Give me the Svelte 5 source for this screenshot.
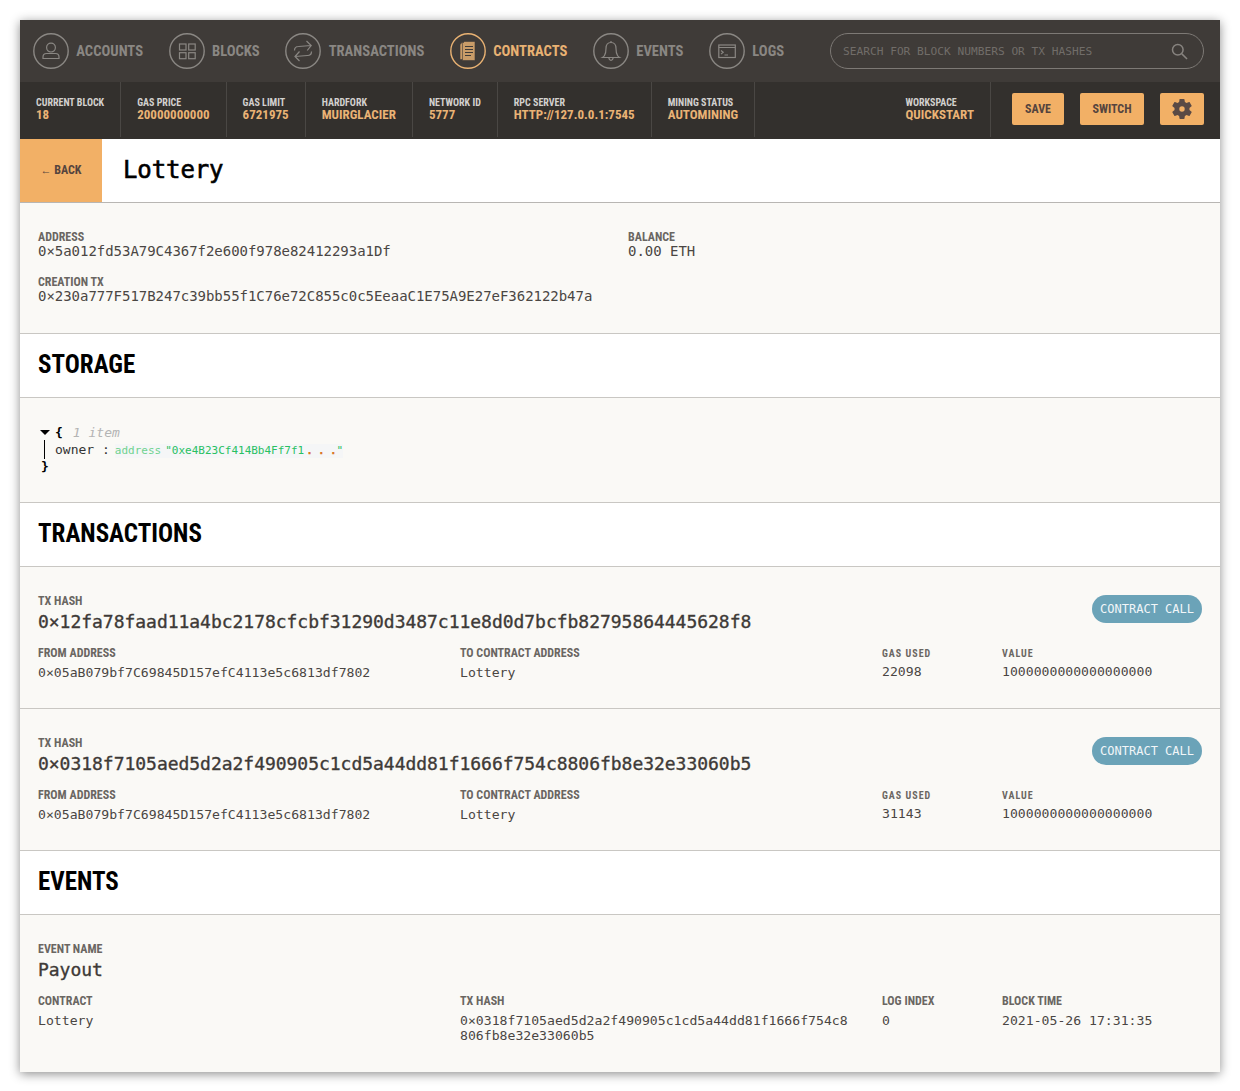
<script>
  const nav = [
    { label: 'ACCOUNTS', icon: 'user' },
    { label: 'BLOCKS', icon: 'blocks' },
    { label: 'TRANSACTIONS', icon: 'swap' },
    { label: 'CONTRACTS', icon: 'doc', active: true },
    { label: 'EVENTS', icon: 'bell' },
    { label: 'LOGS', icon: 'log' }
  ];
  const stats = [
    ['CURRENT BLOCK', '18'],
    ['GAS PRICE', '20000000000'],
    ['GAS LIMIT', '6721975'],
    ['HARDFORK', 'MUIRGLACIER'],
    ['NETWORK ID', '5777'],
    ['RPC SERVER', 'HTTP://127.0.0.1:7545'],
    ['MINING STATUS', 'AUTOMINING']
  ];
  const txs = [
    { hash: '0×12fa78faad11a4bc2178cfcbf31290d3487c11e8d0d7bcfb82795864445628f8', gas: '22098' },
    { hash: '0×0318f7105aed5d2a2f490905c1cd5a44dd81f1666f754c8806fb8e32e33060b5', gas: '31143' }
  ];
</script>

{#snippet icon(name)}
  <svg class="ico" viewBox="0 0 36 36" width="36" height="36" fill="none" stroke="currentColor" stroke-width="1.2">
    <circle cx="18" cy="18" r="17.2" stroke-width="1.4" />
    {#if name === 'user'}
      <circle cx="18" cy="14.6" r="4.4" />
      <path d="M13.5 20.5h9q3.5 0 3.5 3.5v1.5H10V24q0-3.5 3.5-3.5z" />
    {:else if name === 'blocks'}
      <rect x="10.5" y="11" width="6.5" height="6" />
      <rect x="19.7" y="11" width="6.5" height="6" />
      <rect x="10.5" y="19.7" width="6.5" height="6" />
      <rect x="19.7" y="19.7" width="6.5" height="6" />
    {:else if name === 'swap'}
      <path d="M9.500 17.500q0-4 4-4l12.500-1M21.500 8l4.700 4.500-4 5" />
      <path d="M26.500 18.500q0 4-4 4l-12.500 1M14.500 18.500l-4.500 5 4.500 4.500" />
    {:else if name === 'doc'}
      <path class="solid" d="M12 9.500h9v17h-11v-15z" />
      <path class="solid" d="M14.500 8.500h10.500v19H12.500V10.500z" />
      <path class="gap" d="M15 13.500h8M15 16.500h8M15 19.500h8M15 22.500h6" />
    {:else if name === 'bell'}
      <path d="M18 9.500q-5 0-5 6 0 4.500-1.500 7-.8 1.300-2 2h17q-1.200-.7-2-2-1.500-2.500-1.500-7 0-6-5-6z" />
      <path d="M15.800 24.500q.4 2.800 2.200 2.800t2.200-2.800M18 8v1.500" />
    {:else if name === 'log'}
      <rect x="9.800" y="12" width="16.500" height="12.500" />
      <path d="M9.800 14.500h16.500M12 17.500l2.200 1.800-2.200 1.800M15.500 22h3.500" />
    {/if}
  </svg>
{/snippet}

<div class="app">
  <header class="top">
    <nav class="nav">
      {#each nav as n}
        <a class="nav-item" class:active={n.active}>
          {@render icon(n.icon)}
          <span class="nav-label">{n.label}</span>
        </a>
      {/each}
    </nav>
    <div class="search">
      <span class="placeholder">SEARCH FOR BLOCK NUMBERS OR TX HASHES</span>
      <svg viewBox="0 0 18 18" width="17" height="17" fill="none" stroke="#87837f" stroke-width="1.6"><circle cx="7.200" cy="7.200" r="5.600" /><path d="M11.500 11.500l5.500 5.500" /></svg>
    </div>
  </header>

  <div class="status">
    {#each stats as s}
      <div class="stat"><span class="stat-k">{s[0]}</span><span class="stat-v">{s[1]}</span></div>
    {/each}
    <div class="spacer"></div>
    <div class="stat ws"><span class="stat-k">WORKSPACE</span><span class="stat-v">QUICKSTART</span></div>
    <div class="actions">
      <button class="btn save">SAVE</button>
      <button class="btn switch">SWITCH</button>
      <button class="btn gear" aria-label="Settings">
        <svg viewBox="0 0 24 24" width="24" height="24"><path fill="#5a4a45" fill-rule="evenodd" d="M19.430 12.980c.04-.32.070-.64.070-.98s-.030-.66-.070-.98l2.110-1.650c.19-.15.240-.42.120-.64l-2-3.460c-.12-.22-.39-.3-.61-.22l-2.490 1c-.52-.4-1.080-.73-1.690-.98l-.38-2.650A.49.490 0 0 0 14 2h-4c-.25 0-.46.18-.49.420l-.38 2.650c-.61.25-1.170.59-1.690.98l-2.490-1a.5.500 0 0 0-.61.22l-2 3.460c-.13.220-.07.490.12.640l2.110 1.650c-.04.320-.07.650-.07.980s.030.660.070.980l-2.110 1.650c-.19.150-.24.420-.12.640l2 3.460c.12.220.39.300.61.220l2.490-1c.52.400 1.080.730 1.690.980l.38 2.650c.030.240.240.420.49.420h4c.25 0 .46-.18.490-.42l.38-2.650c.61-.25 1.170-.59 1.690-.98l2.490 1c.23.090.49 0 .61-.22l2-3.460c.12-.22.070-.49-.12-.64l-2.110-1.650zM12 14.700a2.700 2.700 0 1 1 0-5.400 2.700 2.700 0 0 1 0 5.400z" /></svg>
      </button>
    </div>
  </div>

  <div class="titlebar">
    <button class="back"><span class="arrow">←</span> BACK</button>
    <h1>Lottery</h1>
  </div>

  <section class="body info">
    <div class="info-grid">
      <div class="f"><div class="k">ADDRESS</div><div class="v14">0×5a012fd53A79C4367f2e600f978e82412293a1Df</div></div>
      <div class="f"><div class="k">BALANCE</div><div class="v14">0.00 ETH</div></div>
      <div class="f wide"><div class="k">CREATION TX</div><div class="v14">0×230a777F517B247c39bb55f1C76e72C855c0c5EeaaC1E75A9E27eF362122b47a</div></div>
    </div>
  </section>

  <h2>STORAGE</h2>
  <section class="body storage">
    <div class="json">
      <div class="jl"><span class="tri"></span><b>&#123;</b> <i>1 item</i></div>
      <div class="jl row"><span class="bar"></span><span class="key">owner :</span><span class="val"><span class="type">address</span><span class="str">"0xe4B23Cf414Bb4Ff7f1<span class="dots">..</span><span class="dot">.</span>"</span></span></div>
      <div class="jl end"><b>&#125;</b></div>
    </div>
  </section>

  <h2>TRANSACTIONS</h2>
  {#each txs as t}
    <section class="body tx">
      <div class="tx-head">
        <div><div class="k">TX HASH</div><div class="hash">{t.hash}</div></div>
        <span class="badge">CONTRACT CALL</span>
      </div>
      <div class="cols">
        <div><div class="k">FROM ADDRESS</div><div class="v13">0×05aB079bf7C69845D157efC4113e5c6813df7802</div></div>
        <div><div class="k">TO CONTRACT ADDRESS</div><div class="v13">Lottery</div></div>
        <div><div class="k sp">GAS USED</div><div class="v13">{t.gas}</div></div>
        <div><div class="k sp">VALUE</div><div class="v13">1000000000000000000</div></div>
      </div>
    </section>
  {/each}

  <h2>EVENTS</h2>
  <section class="body tx event">
    <div><div class="k">EVENT NAME</div><div class="hash">Payout</div></div>
    <div class="cols">
      <div><div class="k">CONTRACT</div><div class="v13">Lottery</div></div>
      <div class="wrap"><div class="k">TX HASH</div><div class="v13">0×0318f7105aed5d2a2f490905c1cd5a44dd81f1666f754c8806fb8e32e33060b5</div></div>
      <div><div class="k">LOG INDEX</div><div class="v13">0</div></div>
      <div><div class="k">BLOCK TIME</div><div class="v13">2021-05-26 17:31:35</div></div>
    </div>
  </section>
</div>

<style>
  :global(body) { background: #fff; }
  .app {
    margin: 20px;
    width: 1200px;
    background: #faf9f6;
    box-shadow: 0 2px 10px rgba(0, 0, 0, 0.45);
    font-family: "DejaVu Sans Mono", monospace;
    color: #3e3a37;
  }
  .top {
    height: 62px;
    background: #3f3b38;
    display: flex;
    align-items: flex-start;
    justify-content: space-between;
    padding: 13px 16px 0 13px;
    box-sizing: border-box;
  }
  .nav { display: flex; gap: 25.600px; }
  .nav-item { display: flex; align-items: center; gap: 7.300px; color: #8a8783; }
  .nav-item.active { color: #e9b273; }
  .ico { display: block; }
  .solid { fill: #c99c68; stroke: #3f3b38; stroke-width: 0.600; }
  .gap { stroke: #3f3b38; stroke-width: 1.200; }
  .nav-label {
    font: 700 14.600px Roboto, sans-serif;
    font-stretch: 75%;
  }
  .search {
    width: 374px;
    height: 36px;
    box-sizing: border-box;
    border: 1px solid #7d7975;
    border-radius: 18px;
    display: flex;
    align-items: center;
    justify-content: space-between;
    padding: 0 15px 0 12px;
  }
  .placeholder { font-size: 11.200px; color: #716d69; }
  .status {
    height: 57px;
    box-sizing: border-box;
    background: #33302d;
    display: flex;
    align-items: stretch;
    padding-bottom: 2px;
  }
  .stat {
    padding: 14px 16px 0;
    border-right: 1px solid #4a4744;
    display: flex;
    flex-direction: column;
  }
  .stat-k {
    font: 700 10px/13px Roboto, sans-serif;
    font-stretch: 75%;
    color: #d3d1cf;
  }
  .stat-v {
    font: 700 13px/12px Roboto, sans-serif;
    font-stretch: 75%;
    color: #eab375;
    letter-spacing: 0.015px;
  }
  .spacer { flex: 1; }
  .actions { display: flex; gap: 16px; padding: 11px 16px 0 21px; }
  .btn {
    height: 32px;
    border: 0;
    border-radius: 2px;
    background: #f2b066;
    color: #55443e;
    font: 700 12px Roboto, sans-serif;
    font-stretch: 75%;
    padding: 0 0 1px;
    display: flex;
    align-items: center;
    justify-content: center;
  }
  .save { width: 52px; }
  .switch { width: 64px; }
  .gear { width: 44px; padding: 0; }
  .titlebar {
    height: 64px;
    box-sizing: border-box;
    background: #fff;
    border-bottom: 1px solid #b8b6b3;
    display: flex;
  }
  .back {
    width: 82px;
    border: 0;
    padding: 0 0 2px;
    background: #f2b066;
    color: #55443e;
    font: 700 12px Roboto, sans-serif;
    font-stretch: 75%;
  }
  .arrow { font-weight: 400; font-size: 11px; }
  h1 {
    margin: 0 0 0 21px;
    font: 400 24px/62px "DejaVu Sans Mono", monospace;
    letter-spacing: -0.100px;
    -webkit-text-stroke: 0.600px #000;
    color: #000;
  }
  h2 {
    margin: 0;
    height: 64px;
    box-sizing: border-box;
    background: #fff;
    border-bottom: 1px solid #c9c7c3;
    padding-left: 18px;
    font: 700 25px/61px Roboto, sans-serif;
    font-stretch: 75%;
    color: #000;
  }
  .body {
    border-bottom: 1px solid #c9c7c3;
    padding-left: 18px;
    padding-right: 18px;
  }
  .info { padding-top: 27px; height: 131px; box-sizing: border-box; }
  .info-grid { display: grid; grid-template-columns: 590px 1fr; row-gap: 17px; }
  .wide { grid-column: 1 / 3; }
  .k {
    font: 700 12px/14px Roboto, sans-serif;
    font-stretch: 75%;
    color: #6a6662;
  }
  .k.sp { font-size: 10px; line-height: 16px; letter-spacing: 1px; }
  .k.sp + .v13 { margin-top: 1.500px; }
  .v14 { font-size: 14px; line-height: 14px; letter-spacing: -0.030px; color: #4a4643; }
  .storage { height: 105px; box-sizing: border-box; padding-top: 26px; }
  .json { position: relative; font-size: 13px; line-height: 17px; color: #333; }
  .jl { padding-left: 17px; display: flex; align-items: center; }
  .jl b { font-weight: 700; color: #000; }
  .jl i { color: #b4b4b4; margin-left: 10px; }
  .tri {
    position: absolute;
    left: 2px;
    top: 6px;
    border-left: 5px solid transparent;
    border-right: 5px solid transparent;
    border-top: 5px solid #000;
  }
  .bar {
    position: absolute;
    left: 6px;
    top: 16px;
    height: 19px;
    border-left: 1px solid #000;
  }
  .key { margin-right: 5px; }
  .val { background: #f5f6f7; font-size: 11px; line-height: 14px; margin-top: 2px; white-space: pre; }
  .type { color: #6fd28f; margin-right: 4px; }
  .str { color: #28c062; }
  .dots, .dot { color: #d9731a; -webkit-text-stroke: 0.600px #d9731a; }
  .dots { letter-spacing: 5.200px; margin-left: 2px; }
  .end { padding-left: 3px; }
  .tx { height: 142px; box-sizing: border-box; padding-top: 27px; }
  .tx-head { display: flex; justify-content: space-between; align-items: flex-start; }
  .hash { font-size: 18px; line-height: 27px; letter-spacing: -0.030px; -webkit-text-stroke: 0.350px #3e3a37; color: #3e3a37; }
  .badge {
    margin-top: 1px;
    background: #6ba3b8;
    color: #f2f6f8;
    font-size: 12px;
    line-height: 28px;
    height: 28px;
    padding: 0 8px;
    border-radius: 14px;
  }
  .cols {
    display: grid;
    grid-template-columns: 422px 422px 120px 1fr;
    margin-top: 11px;
  }
  .v13 { font-size: 13.150px; line-height: 15px; margin-top: 5px; color: #4a4643; }
  .wrap .v13 { word-break: break-all; width: 392px; }
  .event { height: 157px; border-bottom: 0; }
</style>
